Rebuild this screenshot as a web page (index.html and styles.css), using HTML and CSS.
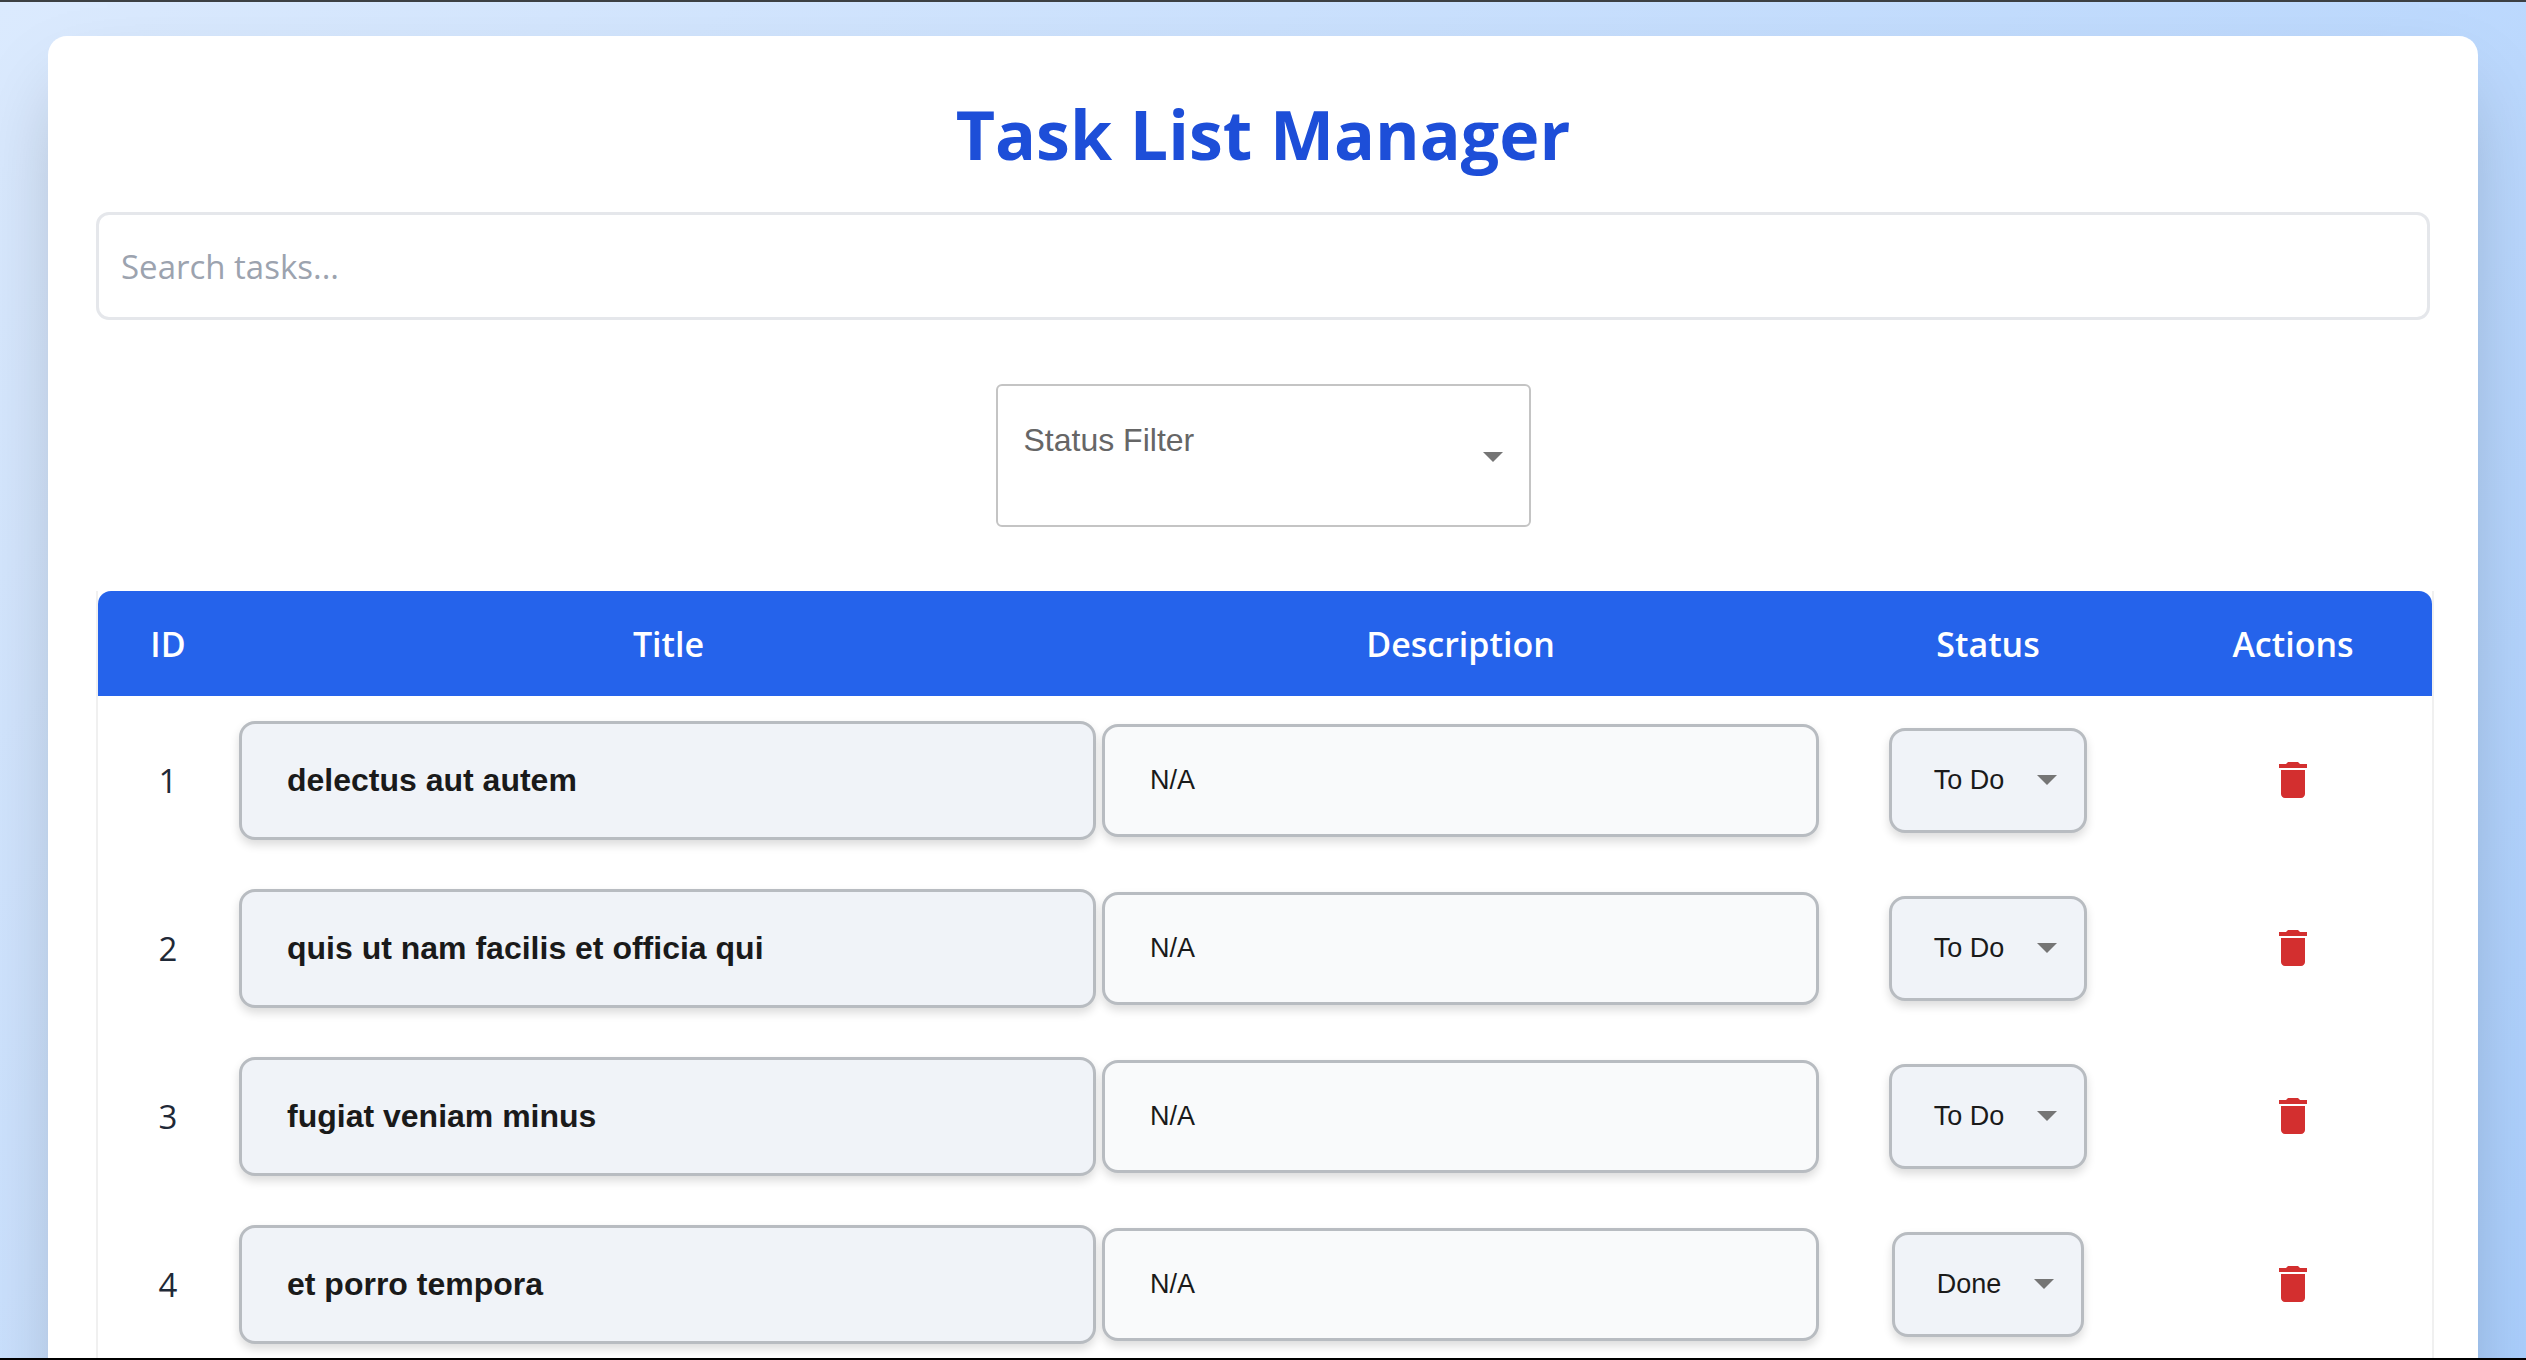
FILE: index.html
```html
<!DOCTYPE html>
<html lang="en">
<head>
  <meta charset="UTF-8">
  <title>Task List Manager</title>
  <link rel="stylesheet" href="styles.css">
</head>
<body>
  <main class="card">
    <h1 class="page-title">Task List Manager</h1>

    <div class="search-box">Search tasks...</div>

    <div class="filter-row">
      <div class="status-filter">
        <span>Status Filter</span>
        <svg class="arrow" viewBox="7 10 10 5"><path d="M7 10l5 5 5-5z"/></svg>
      </div>
    </div>

    <table class="task-table">
      <colgroup>
        <col class="col-id">
        <col class="col-title">
        <col class="col-desc">
        <col class="col-status">
        <col class="col-actions">
      </colgroup>
      <thead>
        <tr><th>ID</th><th>Title</th><th>Description</th><th>Status</th><th>Actions</th></tr>
      </thead>
      <tbody>
        <tr>
          <td class="task-id">1</td>
          <td><div class="title-box">delectus aut autem</div></td>
          <td><div class="desc-box">N/A</div></td>
          <td><div class="status-select">To Do<svg class="arrow" viewBox="7 10 10 5"><path d="M7 10l5 5 5-5z"/></svg></div></td>
          <td><svg class="trash" viewBox="0 0 24 24"><path d="M6 19c0 1.1.9 2 2 2h8c1.1 0 2-.9 2-2V7H6v12zM19 4h-3.5l-1-1h-5l-1 1H5v2h14V4z"/></svg></td>
        </tr>
        <tr>
          <td class="task-id">2</td>
          <td><div class="title-box">quis ut nam facilis et officia qui</div></td>
          <td><div class="desc-box">N/A</div></td>
          <td><div class="status-select">To Do<svg class="arrow" viewBox="7 10 10 5"><path d="M7 10l5 5 5-5z"/></svg></div></td>
          <td><svg class="trash" viewBox="0 0 24 24"><path d="M6 19c0 1.1.9 2 2 2h8c1.1 0 2-.9 2-2V7H6v12zM19 4h-3.5l-1-1h-5l-1 1H5v2h14V4z"/></svg></td>
        </tr>
        <tr>
          <td class="task-id">3</td>
          <td><div class="title-box">fugiat veniam minus</div></td>
          <td><div class="desc-box">N/A</div></td>
          <td><div class="status-select">To Do<svg class="arrow" viewBox="7 10 10 5"><path d="M7 10l5 5 5-5z"/></svg></div></td>
          <td><svg class="trash" viewBox="0 0 24 24"><path d="M6 19c0 1.1.9 2 2 2h8c1.1 0 2-.9 2-2V7H6v12zM19 4h-3.5l-1-1h-5l-1 1H5v2h14V4z"/></svg></td>
        </tr>
        <tr>
          <td class="task-id">4</td>
          <td><div class="title-box">et porro tempora</div></td>
          <td><div class="desc-box">N/A</div></td>
          <td><div class="status-select">Done<svg class="arrow" viewBox="7 10 10 5"><path d="M7 10l5 5 5-5z"/></svg></div></td>
          <td><svg class="trash" viewBox="0 0 24 24"><path d="M6 19c0 1.1.9 2 2 2h8c1.1 0 2-.9 2-2V7H6v12zM19 4h-3.5l-1-1h-5l-1 1H5v2h14V4z"/></svg></td>
        </tr>
      </tbody>
    </table>
  </main>
</body>
</html>
```

FILE: styles.css
```css
* { box-sizing: border-box; }
html, body { margin: 0; height: 100%; }
body {
  height: 1360px;
  overflow: hidden;
  border-top: 2px solid #3c4043;
  border-bottom: 2px solid #000;
  padding: 34px 48px 0;
  background: linear-gradient(135deg, #dbeafe 0%, #abcffd 100%);
  font-family: "Open Sans", "Noto Sans", sans-serif;
}

.card {
  height: 1400px;
  padding: 48px;
  background-color: #fff;
  border-radius: 19px;
  box-shadow: 0 40px 80px -19px rgba(0, 0, 0, 0.25);
}

.page-title {
  margin: 0 0 28px;
  height: 100px;
  font-size: 68px;
  line-height: 100px;
  font-weight: 700;
  text-align: center;
  color: #1d4ed8;
}

.search-box {
  height: 108px;
  padding: 0 22px;
  display: flex;
  align-items: center;
  border: 3px solid #e5e7eb;
  border-radius: 13px;
  font-size: 33px;
  color: #9ca3af;
}

.filter-row {
  display: flex;
  justify-content: center;
  margin: 64px 0;
}

.status-filter {
  width: 535px;
  height: 143px;
  display: flex;
  justify-content: space-between;
  padding: 36px 26px 0 26px;
  border: 2px solid #c4c4c4;
  border-radius: 6px;
  font-family: "Liberation Sans", Arial, sans-serif;
  font-size: 32px;
  color: #666;
}

.status-filter .arrow { margin-top: 30px; }

.arrow {
  width: 20px;
  height: 10px;
  fill: #757575;
  flex: none;
}

.task-table {
  width: 2334px;
  margin-left: 0;
  table-layout: fixed;
  border-collapse: separate;
  border-spacing: 0;
  border-left: 2px solid #f0f0f0;
  border-right: 2px solid #f0f0f0;
}

.col-id { width: 140px; }
.col-title { width: 861px; }
.col-desc { width: 723px; }
.col-status { width: 332px; }
.col-actions { width: 278px; }

.task-table th {
  height: 105px;
  background-color: #2563eb;
  color: #fff;
  font-size: 34px;
  font-weight: 600;
}

.task-table th:first-child { border-top-left-radius: 13px; }
.task-table th:last-child { border-top-right-radius: 13px; }

.task-table td {
  height: 168px;
  padding: 0;
  text-align: center;
  vertical-align: middle;
}

.task-table .task-id {
  font-size: 33px;
  color: #1f2937;
}

.title-box,
.desc-box,
.status-select {
  font-family: "Liberation Sans", Arial, sans-serif;
  color: #1a1a1a;
  text-align: left;
  border: 3px solid #b8bcc1;
  box-shadow: 0 5px 10px rgba(0, 0, 0, 0.14);
}

.title-box {
  height: 119px;
  margin: 0 3px 0 1px;
  padding: 0 45px;
  line-height: 113px;
  font-size: 32px;
  font-weight: 700;
  background-color: #f0f3f8;
  border-radius: 16px;
}

.desc-box {
  height: 113px;
  margin: 0 3px;
  padding: 0 45px;
  line-height: 107px;
  font-size: 27px;
  background-color: #f9fafb;
  border-radius: 16px;
}

.status-select {
  width: fit-content;
  height: 105px;
  margin: 0 auto;
  display: flex;
  align-items: center;
  padding: 0 27px 0 42px;
  font-size: 27px;
  background-color: #f0f3f8;
  border-radius: 16px;
}

.status-select .arrow { margin-left: 33px; }

.trash {
  display: block;
  width: 48px;
  height: 48px;
  margin: 0 auto;
  fill: #d32f2f;
}
```
